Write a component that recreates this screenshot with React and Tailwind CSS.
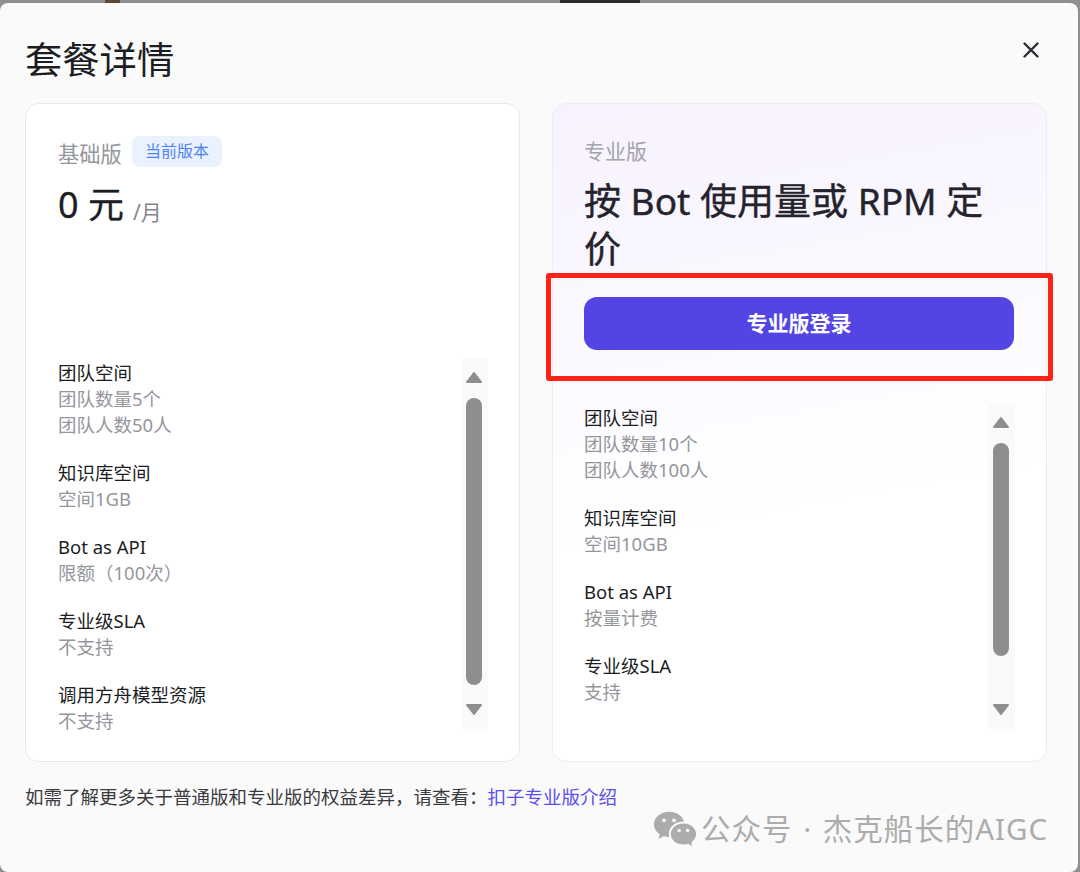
import React from "react";
import { RiWechatFill } from "react-icons/ri";

const font = { fontFamily: "'Noto Sans', 'Noto Sans CJK SC', sans-serif" };

function Feature({ title, lines }) {
  return (
    <div className="mb-[21.2px]">
      <p className="text-[18.5px] leading-[26.4px] text-[#1c1d23]">{title}</p>
      {lines.map((line) => (
        <p key={line} className="text-[18.5px] leading-[26.4px] text-[#95969c]">
          {line}
        </p>
      ))}
    </div>
  );
}

function Arrow({ down }) {
  return (
    <svg width="18" height="13" viewBox="0 0 18 13" className={down ? "rotate-180" : ""}>
      <path d="M9 2L16 11H2Z" fill="#8e8e8e" stroke="#8e8e8e" strokeWidth="2" strokeLinejoin="round" />
    </svg>
  );
}

function Scrollbar({ thumb }) {
  return (
    <div className="flex h-full w-[27px] shrink-0 flex-col items-center bg-[#fafafa] pr-[1px]">
      <div className="mt-[13px] flex">
        <Arrow />
      </div>
      <div className={`mt-[14px] w-[16px] rounded-full bg-[#8e8e8e] ${thumb}`} />
      <div className="mb-[13px] mt-auto flex">
        <Arrow down />
      </div>
    </div>
  );
}

function FeatureList({ items, thumb, height }) {
  return (
    <div className={`flex justify-between ${height}`}>
      <div className="pt-[1.5px]">
        {items.map((item) => (
          <Feature key={item.title} title={item.title} lines={item.lines} />
        ))}
      </div>
      <Scrollbar thumb={thumb} />
    </div>
  );
}

const basicItems = [
  { title: "团队空间", lines: ["团队数量5个", "团队人数50人"] },
  { title: "知识库空间", lines: ["空间1GB"] },
  { title: "Bot as API", lines: ["限额（100次）"] },
  { title: "专业级SLA", lines: ["不支持"] },
  { title: "调用方舟模型资源", lines: ["不支持"] },
];

const proItems = [
  { title: "团队空间", lines: ["团队数量10个", "团队人数100人"] },
  { title: "知识库空间", lines: ["空间10GB"] },
  { title: "Bot as API", lines: ["按量计费"] },
  { title: "专业级SLA", lines: ["支持"] },
];

export default function App() {
  return (
    <div style={font} className="relative h-[872px] w-[1080px] overflow-hidden bg-[#8f8f8f] pr-[2px] pt-[3px]">
      {/* background peeking out above the modal */}
      <div className="absolute left-[105px] top-0 h-[3px] w-[15px] bg-[#5a4a35]" />
      <div className="absolute left-[560px] top-0 h-[3px] w-[80px] bg-[#2a2a2a]" />

      <div className="relative h-[869px] rounded-[8px] bg-[#fafafa] px-[25px]">
        <div className="flex h-[100px] items-start justify-between">
          <h1 className="mt-[32px] text-[37.3px] font-normal leading-[50px] text-[#1c1d23]">套餐详情</h1>
          <svg className="mr-[13px] mt-[38px]" width="18" height="18" viewBox="0 0 18 18" fill="none">
            <path d="M2.5 2.5L15.5 15.5M15.5 2.5L2.5 15.5" stroke="#2b2c33" strokeWidth="2.4" strokeLinecap="round" />
          </svg>
        </div>

        <div className="flex gap-[32px]">
          {/* Basic */}
          <div className="flex h-[659px] w-[495px] flex-col rounded-[14px] border border-[#e9e9ec] bg-white pl-[32px] pr-[31px]">
            <div className="h-[254px]">
              <div className="mt-[32px] flex items-center gap-[10px]">
                <span className="relative top-[2px] text-[21.3px] leading-[31px] text-[#95969c]">基础版</span>
                <span className="rounded-[8px] bg-[#ebf2ff] px-[13px] text-[16px] leading-[31px] text-[#4d82f5]">当前版本</span>
              </div>
              <div className="mt-[13px] flex items-baseline">
                <span className="text-[36px] font-normal leading-[50px] text-[#1c1d23] [-webkit-text-stroke:0.3px]">0 元</span>
                <span className="relative top-[2px] ml-[9px] text-[21px] text-[#85868c]">/月</span>
              </div>
            </div>
            <FeatureList items={basicItems} thumb="h-[287px]" height="h-[371px]" />
          </div>

          {/* Pro */}
          <div className="flex h-[659px] w-[495px] flex-col rounded-[14px] border border-[#eeecf3] bg-[linear-gradient(170deg,#f7f2ff_0%,#fbf8ff_30%,#ffffff_60%)] pl-[31px] pr-[31px]">
            <div className="h-[299px]">
              <p className="mt-[32px] text-[21px] leading-[31px] text-[#a5a3ad]">专业版</p>
              <p className="mt-[10px] text-[37px] font-normal leading-[48px] text-[#24232d] [-webkit-text-stroke:0.4px]">按 Bot 使用量或 RPM 定价</p>
              <button className="mt-[24px] h-[53px] w-[430px] rounded-[13px] bg-[#5344e4] text-[21px] font-bold text-white">专业版登录</button>
            </div>
            <FeatureList items={proItems} thumb="h-[213px]" height="h-[326px]" />
          </div>
        </div>

        <p className="mt-[22px] text-[18.5px] leading-[26px] text-[#3a3b40]">
          如需了解更多关于普通版和专业版的权益差异，请查看：
          <a className="text-[#5b4ff2]">扣子专业版介绍</a>
        </p>
      </div>

      {/* red annotation around the login button */}
      <div className="absolute left-[546px] top-[273px] h-[108px] w-[507px] rounded-[3px] border-[5px] border-[#ff2216]" />

      {/* watermark */}
      <div className="absolute left-[652px] top-[806px] flex items-center text-[#acacac]">
        <RiWechatFill size={46} />
        <span className="ml-[3px] text-[29.5px] leading-[44px] tracking-[1px] [word-spacing:2px]">公众号 · 杰克船长的AIGC</span>
      </div>
    </div>
  );
}
